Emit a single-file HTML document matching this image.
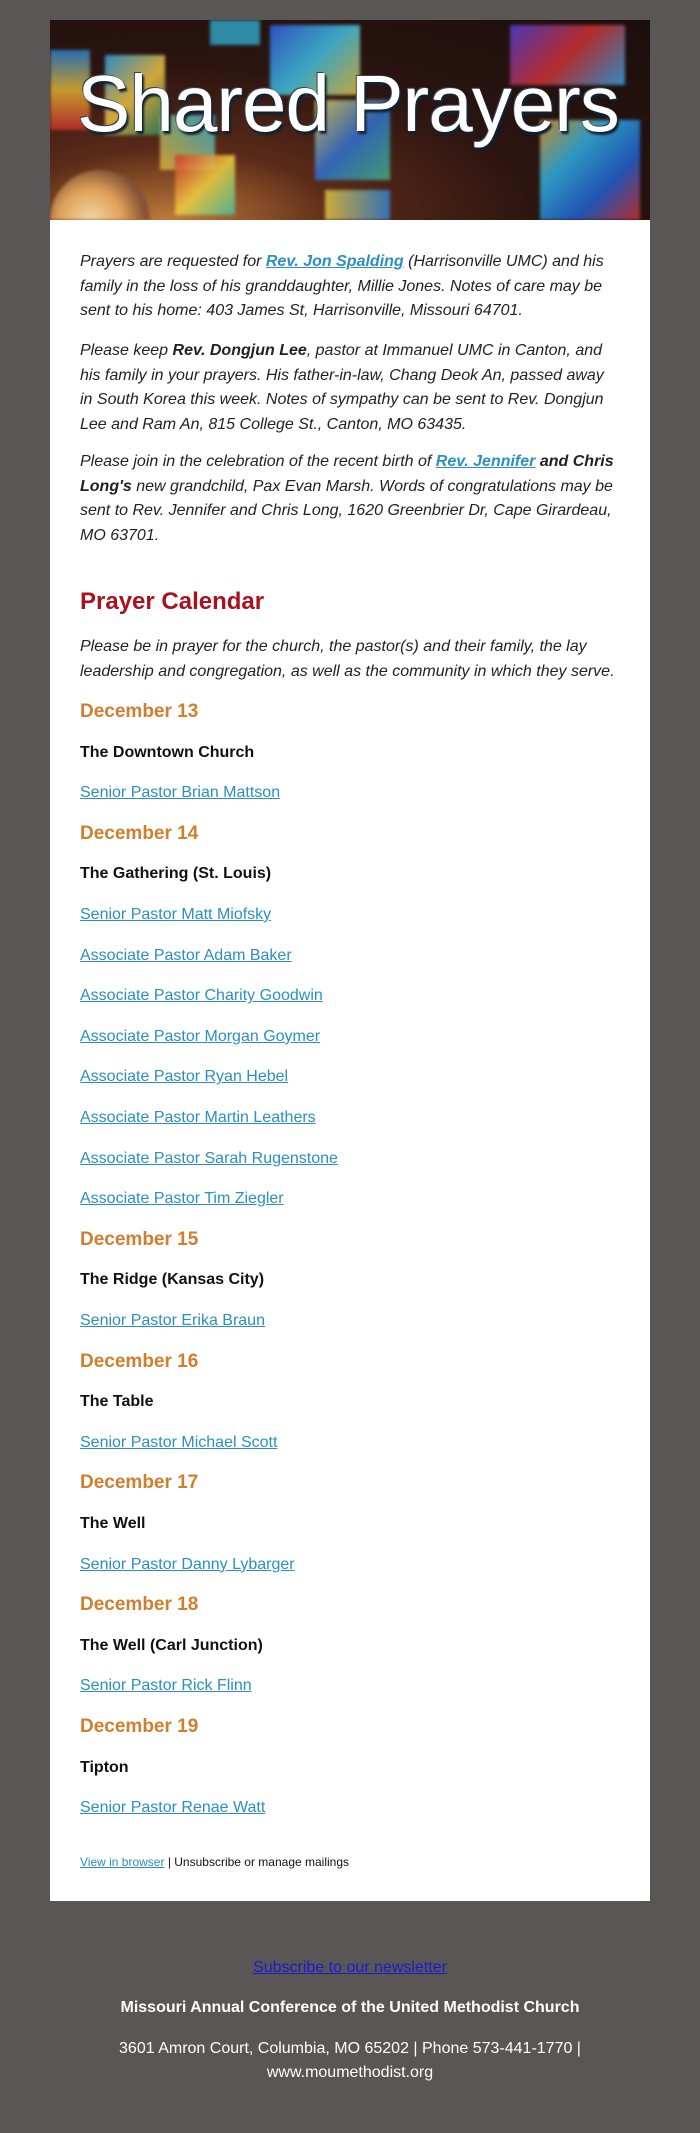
<!DOCTYPE html>
<html><head><meta charset="utf-8"><style>
*{margin:0;padding:0;box-sizing:border-box}
body{width:700px;height:2133px;background:#5a5655;font-family:"Liberation Sans",Arial,sans-serif;position:relative;overflow:hidden}
.card{position:absolute;left:50px;top:20px;width:600px;height:1881px;background:#fff}
.hdr{position:absolute;left:0;top:0;width:600px;height:200px;overflow:hidden;background:radial-gradient(ellipse at 20% 100%,#c07a3a 0%,#5a2a18 25%,#2a1410 55%,#1a0e0c 100%)}
.hdr i{position:absolute;display:block;opacity:.85;filter:blur(1.5px)}
.title{position:absolute;left:27px;top:38px;font-size:80px;color:#fff;white-space:nowrap;letter-spacing:-1px;text-shadow:2px 3px 2px #123,-1px -1px 0 #345,1px 1px 0 #345}
.p{position:absolute;left:30px;width:540px;font-size:16px;line-height:24.5px;font-style:italic;color:#222}
a.l{color:#2b8fc2;text-decoration:underline}
.row{position:absolute;left:30px;font-size:16px;white-space:nowrap}
.dec{color:#cf7f2e;font-weight:bold;font-size:19px}
.ch{color:#111;font-weight:bold}
.lk{color:#2b8fc2;text-decoration:underline}
.foot{position:absolute;left:0;width:700px;text-align:center;color:#fff;font-size:16px}
</style></head><body>
<div class="card">
<div class="hdr">
<i style="left:0;top:30px;width:40px;height:80px;background:linear-gradient(#2a7fd0,#e0b030,#c03030)"></i>
<i style="left:55px;top:35px;width:60px;height:80px;background:linear-gradient(135deg,#30a0e0,#f0c040,#208060)"></i>
<i style="left:110px;top:95px;width:55px;height:55px;background:linear-gradient(45deg,#e0b030,#30b0d0)"></i>
<i style="left:125px;top:135px;width:60px;height:60px;background:linear-gradient(135deg,#d03030,#f0d040,#40c0a0)"></i>
<i style="left:160px;top:0;width:50px;height:25px;background:#30a0c0"></i>
<i style="left:220px;top:5px;width:90px;height:70px;background:linear-gradient(135deg,#3060e0,#40c0e0,#e0c040)"></i>
<i style="left:265px;top:80px;width:75px;height:80px;background:linear-gradient(135deg,#e0d060,#3070d0,#40b080)"></i>
<i style="left:275px;top:170px;width:65px;height:30px;background:linear-gradient(90deg,#e0c040,#3080d0)"></i>
<i style="left:460px;top:5px;width:115px;height:60px;background:linear-gradient(135deg,#5040d0,#d03030,#30a0e0)"></i>
<i style="left:490px;top:100px;width:100px;height:100px;background:linear-gradient(135deg,#e0a030,#30b0e0,#2060d0,#d03030)"></i>
<i style="left:0;top:150px;width:100px;height:50px;border-radius:50px 50px 0 0;background:radial-gradient(circle at 40% 100%,#fff0c0,#f0b060 40%,#80503a 70%)"></i>
<div class="title">Shared Prayers</div>
</div>
<div class="p" style="top:230px">Prayers are requested for <a class="l" style="font-weight:bold">Rev. Jon Spalding</a> (Harrisonville UMC) and his family in the loss of his granddaughter, Millie Jones. Notes of care may be sent to his home: 403 James St, Harrisonville, Missouri 64701.</div>
<div class="p" style="top:319px">Please keep <b>Rev. Dongjun Lee</b>, pastor at Immanuel UMC in Canton, and his family in your prayers. His father-in-law, Chang Deok An, passed away in South Korea this week. Notes of sympathy can be sent to Rev. Dongjun Lee and Ram An, 815 College St., Canton, MO 63435.</div>
<div class="p" style="top:430px">Please join in the celebration of the recent birth of <a class="l" style="font-weight:bold">Rev. Jennifer</a> <b>and Chris Long's</b> new grandchild, Pax Evan Marsh. Words of congratulations may be sent to Rev. Jennifer and Chris Long, 1620 Greenbrier Dr, Cape Girardeau, MO 63701.</div>
<div class="row" style="top:568px;font-size:24px;font-weight:bold;color:#a8121f">Prayer Calendar</div>
<div class="p" style="top:615px">Please be in prayer for the church, the pastor(s) and their family, the lay leadership and congregation, as well as the community in which they serve.</div>
<div id="cal"></div>
<div class="row" style="top:1835px;font-size:12px;color:#111"><a class="lk">View in browser</a> | Unsubscribe or manage mailings</div>
</div>
<div class="foot" style="top:1959px"><a style="color:#1a1ad0;text-decoration:underline">Subscribe to our newsletter</a></div>
<div class="foot" style="top:1999px;font-weight:bold">Missouri Annual Conference of the United Methodist Church</div>
<div class="foot" style="top:2037px;line-height:24px">3601 Amron Court, Columbia, MO 65202 | Phone 573-441-1770 |<br>www.moumethodist.org</div>
<script>
var items=[["d","December 13"],["c","The Downtown Church"],["l","Senior Pastor Brian Mattson"],["d","December 14"],["c","The Gathering (St. Louis)"],["l","Senior Pastor Matt Miofsky"],["l","Associate Pastor Adam Baker"],["l","Associate Pastor Charity Goodwin"],["l","Associate Pastor Morgan Goymer"],["l","Associate Pastor Ryan Hebel"],["l","Associate Pastor Martin Leathers"],["l","Associate Pastor Sarah Rugenstone"],["l","Associate Pastor Tim Ziegler"],["d","December 15"],["c","The Ridge (Kansas City)"],["l","Senior Pastor Erika Braun"],["d","December 16"],["c","The Table"],["l","Senior Pastor Michael Scott"],["d","December 17"],["c","The Well"],["l","Senior Pastor Danny Lybarger"],["d","December 18"],["c","The Well (Carl Junction)"],["l","Senior Pastor Rick Flinn"],["d","December 19"],["c","Tipton"],["l","Senior Pastor Renae Watt"]];
var h="";items.forEach(function(it,i){var y=692+i*40.6-(it[0]=="d"?11:9);var cls=it[0]=="d"?"dec":it[0]=="c"?"ch":"lk";h+='<div class="row '+cls+'" style="top:'+y+'px">'+it[1]+'</div>';});
document.getElementById("cal").innerHTML=h;
</script>
</body></html>
